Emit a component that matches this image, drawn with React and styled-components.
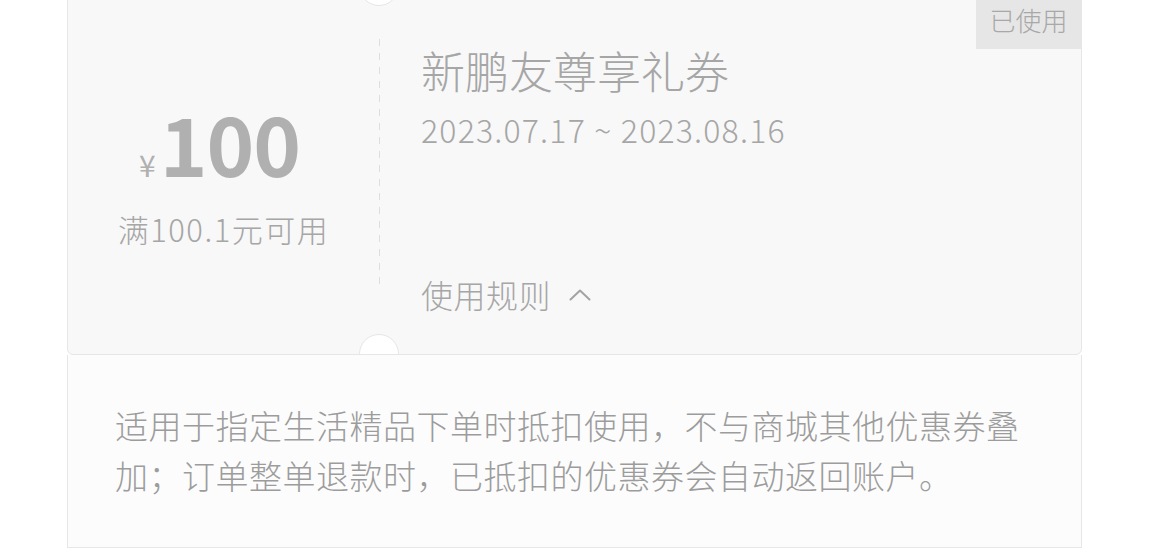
import React from 'react';
import styled, { createGlobalStyle } from 'styled-components';

const GlobalStyle = createGlobalStyle`
    body {
        margin: 0;
        background: #fff;
        font-family: "Noto Sans CJK SC", "Noto Sans", sans-serif;
        font-weight: 300;
    }
`;

const coupon = {
    amount: '100',
    limit: '满100.1元可用',
    title: '新鹏友尊享礼券',
    period: '2023.07.17 ~ 2023.08.16',
    status: '已使用',
    rules: '适用于指定生活精品下单时抵扣使用，不与商城其他优惠券叠加；订单整单退款时，已抵扣的优惠券会自动返回账户。',
};

const Chevron = () => (
    <svg width="22" height="13" viewBox="0 0 22 13" fill="none">
        <path d="M1.5 11.5 L11 2.5 L20.5 11.5" stroke="#a3a3a3" strokeWidth="2" strokeLinecap="round" strokeLinejoin="round" />
    </svg>
);

const App = () => {
    return (
        <Page>
            <GlobalStyle />
            <Ticket>
                <Notch $side="top" />
                <Notch $side="bottom" />
                <Badge>{coupon.status}</Badge>

                <Value>
                    <Amount>
                        <span className='yen'>¥</span>
                        <span className='num'>{coupon.amount}</span>
                    </Amount>
                    <Limit>{coupon.limit}</Limit>
                </Value>

                <Divider />

                <Info>
                    <Title>{coupon.title}</Title>
                    <Period>{coupon.period}</Period>
                    <RuleToggle>
                        使用规则
                        <Chevron />
                    </RuleToggle>
                </Info>
            </Ticket>

            <Rules>{coupon.rules}</Rules>
        </Page>
    )
};

const Page = styled.div`
    width: 1015px;
    margin-left: 67px;
    margin-top: -15px;
`;

const Ticket = styled.div`
    position: relative;
    display: flex;
    height: 370px;
    box-sizing: border-box;
    background: #f8f8f8;
    border: 1px solid #e6e6e6;
    border-radius: 6px;
    overflow: hidden;
`;

const Notch = styled.span`
    position: absolute;
    left: 291px;
    ${({ $side }) => $side === 'top' ? 'top: -20px;' : 'bottom: -20px;'}
    width: 38px;
    height: 38px;
    border-radius: 50%;
    background: #fff;
    border: 1px solid #e6e6e6;
`;

const Badge = styled.div`
    position: absolute;
    top: 0;
    right: 0;
    width: 105px;
    height: 63px;
    box-sizing: border-box;
    padding-top: 15px;
    background: #e6e6e6;
    color: #a8a8a8;
    font-size: 26px;
    text-align: center;
    line-height: 38px;
`;

const Value = styled.div`
    width: 311px;
    display: flex;
    flex-direction: column;
    align-items: center;
    padding-top: 115px;
    box-sizing: border-box;

    .yen {
        font-size: 30px;
        font-weight: 400;
        color: #b0b0b0;
        margin-right: 4px;
    }
    .num {
        font-size: 81px;
        font-weight: 700;
        color: #b0b0b0;
        letter-spacing: -1px;
    }
`;

const Amount = styled.div`
    display: flex;
    align-items: baseline;
    line-height: 82px;
    margin-left: -8px;
`;

const Limit = styled.div`
    margin-top: 4px;
    font-size: 31px;
    letter-spacing: 1.5px;
    color: #a6a6a6;
    line-height: 40px;
`;

const Divider = styled.div`
    width: 1px;
    margin: 53px 0 63px;
    background: repeating-linear-gradient(to bottom, #dedede 0 7px, transparent 7px 14px);
`;

const Info = styled.div`
    flex: 1;
    display: flex;
    flex-direction: column;
    padding: 56px 0 0 41px;
`;

const Title = styled.div`
    font-size: 44px;
    line-height: 56px;
    color: #a6a6a6;
`;

const Period = styled.div`
    margin-top: 10px;
    font-size: 32px;
    letter-spacing: 1.2px;
    line-height: 42px;
    color: #a6a6a6;
`;

const RuleToggle = styled.div`
    margin-top: 124px;
    display: flex;
    align-items: center;
    gap: 18px;
    font-size: 32px;
    letter-spacing: 0.5px;
    line-height: 40px;
    color: #a6a6a6;
`;

const Rules = styled.div`
    box-sizing: border-box;
    height: 193px;
    padding: 45px 46px 0 47px;
    background: #fcfcfc;
    border: 1px solid #e6e6e6;
    border-top: none;
    font-size: 33px;
    letter-spacing: 0.5px;
    line-height: 50px;
    color: #9c9c9c;
`;

export default App;
